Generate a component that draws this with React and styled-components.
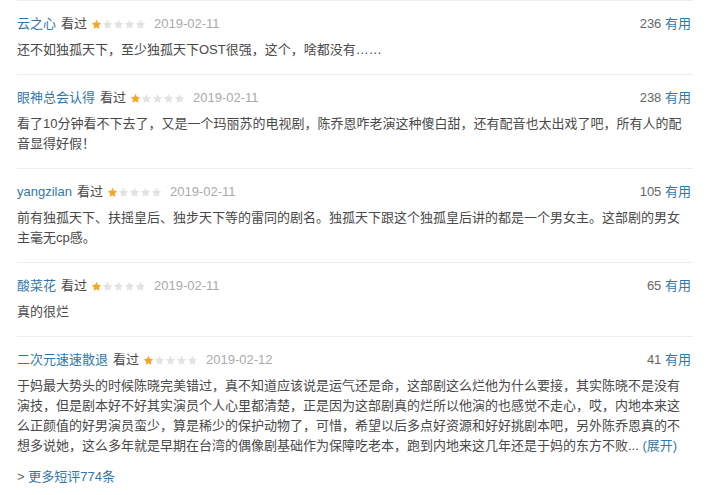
import styled, { createGlobalStyle } from 'styled-components'

const comments = [
    { name: '云之心', date: '2019-02-11', votes: 236, text: '还不如独孤天下，至少独孤天下OST很强，这个，啥都没有……' },
    { name: '眼神总会认得', date: '2019-02-11', votes: 238, text: '看了10分钟看不下去了，又是一个玛丽苏的电视剧，陈乔恩咋老演这种傻白甜，还有配音也太出戏了吧，所有人的配音显得好假！' },
    { name: 'yangzilan', date: '2019-02-11', votes: 105, text: '前有独孤天下、扶摇皇后、独步天下等的雷同的剧名。独孤天下跟这个独孤皇后讲的都是一个男女主。这部剧的男女主毫无cp感。' },
    { name: '酸菜花', date: '2019-02-11', votes: 65, text: '真的很烂' },
    { name: '二次元速速散退', date: '2019-02-12', votes: 41, text: '于妈最大势头的时候陈晓完美错过，真不知道应该说是运气还是命，这部剧这么烂他为什么要接，其实陈晓不是没有演技，但是剧本好不好其实演员个人心里都清楚，正是因为这部剧真的烂所以他演的也感觉不走心，哎，内地本来这么正颜值的好男演员蛮少，算是稀少的保护动物了，可惜，希望以后多点好资源和好好挑剧本吧，另外陈乔恩真的不想多说她，这么多年就是早期在台湾的偶像剧基础作为保障吃老本，跑到内地来这几年还是于妈的东方不败...', more: true },
]

function Stars({ rating }) {
    return (
        <StarRow>
            {[0, 1, 2, 3, 4].map(i => (
                <svg key={i} width="11" height="11" viewBox="0 0 24 24">
                    <path d="M12 1.8l3.1 6.6 7.2.9-5.3 5 1.4 7.1L12 17.9l-6.4 3.5 1.4-7.1-5.3-5 7.2-.9z" fill={i < rating ? '#f5a623' : '#e3e3e3'} />
                </svg>
            ))}
        </StarRow>
    )
}

export default function App() {
    return (
        <>
            <GlobalStyle />
            <List>
                {comments.map((c, index) => (
                    <Item key={index} last={index === comments.length - 1}>
                        <Header>
                            <Info>
                                <Name>{c.name}</Name>
                                <Status>看过</Status>
                                <Stars rating={1} />
                                <Time>{c.date}</Time>
                            </Info>
                            <Votes>{c.votes} <span>有用</span></Votes>
                        </Header>
                        <Text>
                            {c.text}
                            {c.more && <Expand> (展开)</Expand>}
                        </Text>
                    </Item>
                ))}
                <More>&gt; <span>更多短评774条</span></More>
            </List>
        </>
    )
}

const GlobalStyle = createGlobalStyle`
    body {
        margin: 0;
        background: #ffffff;
        font-family: 'Liberation Sans', 'Noto Sans CJK SC', sans-serif;
        font-size: 13px;
    }
`

const List = styled.div`
    width: 676px;
    margin-left: 17px;
    border-top: 1px solid #ececec;
`

const Item = styled.div`
    padding: ${props => props.last ? '13px 0 11px' : '13px 0 14px'};
    border-bottom: ${props => props.last ? 'none' : '1px solid #ececec'};
`

const Header = styled.div`
    display: flex;
    align-items: center;
    justify-content: space-between;
    height: 20px;
    line-height: 20px;
    padding-right: 2px;
`

const Info = styled.div`
    display: flex;
    align-items: center;
`

const Name = styled.span`
    color: #3377aa;
`

const Status = styled.span`
    color: #494949;
    margin-left: 5px;
`

const StarRow = styled.span`
    display: flex;
    margin-left: 4px;
    svg {
        display: block;
    }
`

const Time = styled.span`
    color: #aaaaaa;
    margin-left: 8px;
`

const Votes = styled.span`
    color: #666666;
    span {
        color: #3377aa;
    }
`

const Text = styled.p`
    margin: 6px 0 0;
    width: 670px;
    line-height: 20px;
    color: #494949;
`

const Expand = styled.span`
    color: #3377aa;
`

const More = styled.div`
    line-height: 20px;
    color: #666666;
    span {
        color: #3377aa;
    }
`
